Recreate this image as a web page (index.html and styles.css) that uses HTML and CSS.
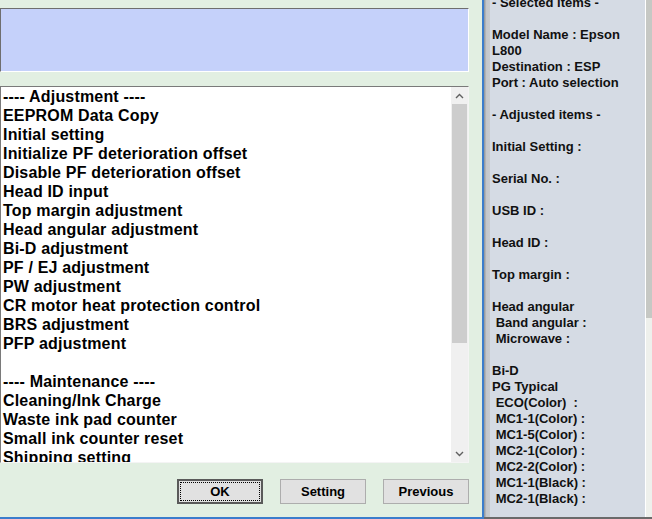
FILE: index.html
```html
<!DOCTYPE html>
<html>
<head>
<meta charset="utf-8">
<link rel="stylesheet" href="styles.css">
</head>
<body>
<div class="screen">
  <div class="left">
    <div class="status"></div>
    <div class="list">
      <div class="items">
        <div>---- Adjustment ----</div>
        <div>EEPROM Data Copy</div>
        <div>Initial setting</div>
        <div>Initialize PF deterioration offset</div>
        <div>Disable PF deterioration offset</div>
        <div>Head ID input</div>
        <div>Top margin adjustment</div>
        <div>Head angular adjustment</div>
        <div>Bi-D adjustment</div>
        <div>PF / EJ adjustment</div>
        <div>PW adjustment</div>
        <div>CR motor heat protection control</div>
        <div>BRS adjustment</div>
        <div>PFP adjustment</div>
        <div class="blank"></div>
        <div>---- Maintenance ----</div>
        <div>Cleaning/Ink Charge</div>
        <div>Waste ink pad counter</div>
        <div>Small ink counter reset</div>
        <div>Shipping setting</div>
      </div>
      <div class="vscroll">
        <div class="arrow"><svg width="9" height="6" viewBox="0 0 9 6"><path d="M1 5 L4.5 1.5 L8 5" fill="none" stroke="#606060" stroke-width="1.4"/></svg></div>
        <div class="thumb"></div>
        <div class="track"></div>
        <div class="arrow"><svg width="9" height="6" viewBox="0 0 9 6"><path d="M1 1 L4.5 4.5 L8 1" fill="none" stroke="#606060" stroke-width="1.4"/></svg></div>
      </div>
    </div>
    <div class="buttons">
      <button class="btn default"><span class="focus">OK</span></button>
      <button class="btn">Setting</button>
      <button class="btn">Previous</button>
    </div>
  </div>
  <div class="divider"></div>
  <div class="right">
    <div class="info">- Selected items -

Model Name : Epson L800
Destination : ESP
Port : Auto selection

- Adjusted items -

Initial Setting :

Serial No. :

USB ID :

Head ID :

Top margin :

Head angular
 Band angular :
 Microwave :

Bi-D
PG Typical
 ECO(Color)  :
 MC1-1(Color) :
 MC1-5(Color) :
 MC2-1(Color) :
 MC2-2(Color) :
 MC1-1(Black) :
 MC2-1(Black) :</div>
    <div class="rscroll">
      <div class="rthumb"></div>
      <div class="rtrack"></div>
    </div>
  </div>
</div>
</body>
</html>
```

FILE: styles.css
```css
* { box-sizing: border-box; }
html, body { margin: 0; padding: 0; }
body {
  width: 652px;
  height: 519px;
  overflow: hidden;
  font-family: "Liberation Sans", Arial, sans-serif;
  font-weight: bold;
  color: #000;
}
.screen {
  display: flex;
  width: 652px;
  height: 519px;
}
.left {
  width: 484px;
  height: 519px;
  background: #e2efe2;
  padding: 8px 13px 0 0;
  border-right: 2px solid #3b7dcc;
  border-bottom: 2px solid #3b7dcc;
  display: flex;
  flex-direction: column;
  flex: none;
}
.status {
  height: 64px;
  background: #c5d1fa;
  border-top: 1px solid #6e6e6e;
  border-left: 1px solid #6e6e6e;
  border-bottom: 1px solid #ffffff;
  border-right: 1px solid #ffffff;
}
.list {
  margin-top: 14px;
  height: 377px;
  background: #fff;
  border-top: 1px solid #7a7a7a;
  border-left: 1px solid #7a7a7a;
  border-bottom: 1px solid #f4f4f4;
  border-right: 1px solid #f4f4f4;
  display: flex;
  overflow: hidden;
}
.items {
  flex: 1;
  padding-left: 2px;
  font-size: 16px;
  line-height: 19px;
  letter-spacing: 0.18px;
  overflow: hidden;
  white-space: nowrap;
}
.blank { height: 19px; }
.vscroll {
  width: 17px;
  flex: none;
  background: #f0f0f0;
  display: flex;
  flex-direction: column;
}
.arrow {
  height: 17px;
  display: flex;
  align-items: center;
  justify-content: center;
  flex: none;
}
.thumb {
  height: 239px;
  margin: 0 1px;
  background: #cdcdcd;
  flex: none;
}
.track { flex: 1; }
.buttons {
  margin-top: 16px;
  display: flex;
  justify-content: flex-end;
  gap: 17px;
}
.btn {
  width: 86px;
  height: 25px;
  background: #e1e1e1;
  border: 1px solid #adadad;
  font-family: "Liberation Sans", Arial, sans-serif;
  font-weight: bold;
  font-size: 13px;
  color: #000;
  padding: 0;
  display: flex;
  align-items: center;
  justify-content: center;
}
.btn.default {
  border: 2px solid #5a5a5a;
  padding: 1px;
}
.focus {
  flex: 1;
  align-self: stretch;
  display: flex;
  align-items: center;
  justify-content: center;
  border: 1px dotted #000;
}
.divider {
  width: 6px;
  flex: none;
  background: linear-gradient(to right, #8e9296, #c4c7cb 40%, #c8cbcf);
  border-bottom: 2px solid #6a6a6a;
}
.right {
  flex: 1;
  display: flex;
  background: #d5dbe4;
  border-bottom: 2px solid #6a6a6a;
}
.info {
  flex: 1;
  padding-left: 2px;
  margin-top: -5px;
  font-size: 13px;
  line-height: 16px;
  white-space: pre-wrap;
  color: #111;
}
.rscroll {
  width: 7px;
  flex: none;
  border-left: 1px solid #ffffff;
  display: flex;
  flex-direction: column;
}
.rthumb {
  height: 318px;
  background: #c6c8c4;
}
.rtrack {
  flex: 1;
  background: #eef0ec;
}
```
